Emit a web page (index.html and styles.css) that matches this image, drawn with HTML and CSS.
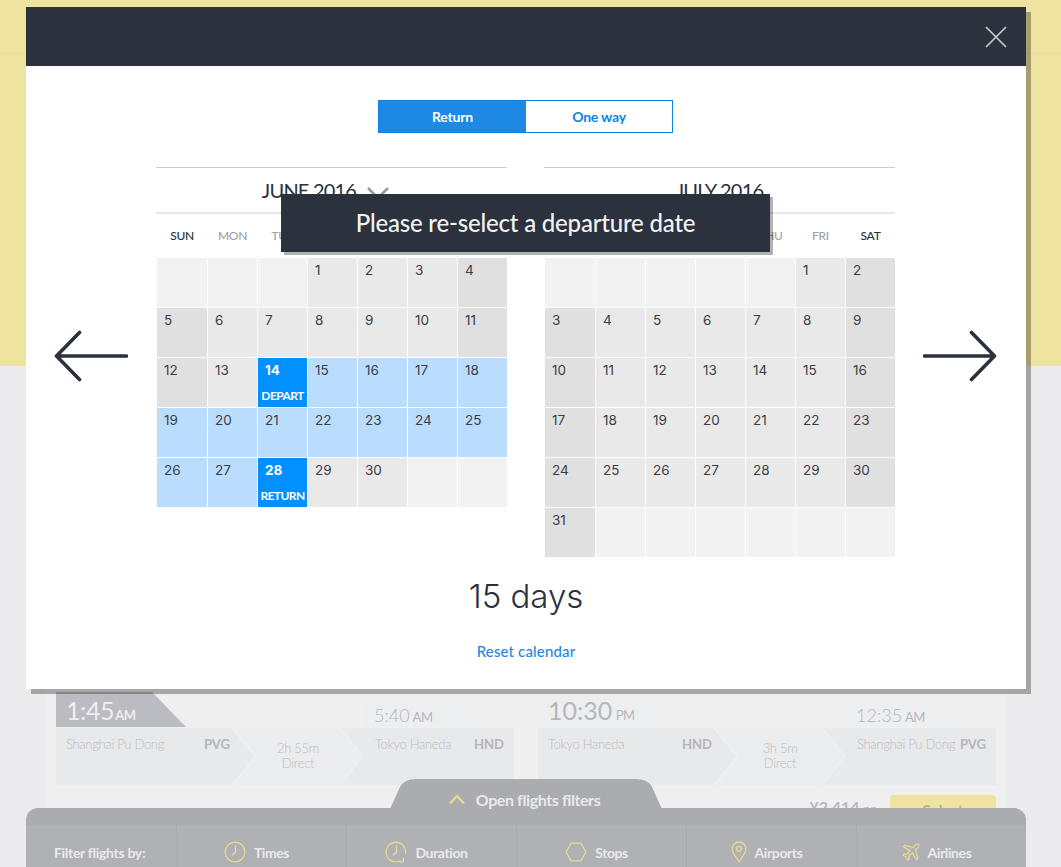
FILE: index.html
```html
<!DOCTYPE html>
<html lang="en">
  <head>
    <meta charset="UTF-8" />
    <title>Flight calendar</title>
    <link rel="stylesheet" href="styles.css">
  </head>
  <body>
    <div class="page-top">
      <div class="page-top-bar"></div>
    </div>

    <div class="results">
      <div class="legs">
        <div class="leg">
          <div class="leg-times">
            <div class="time-tab time-tab-main">1:45 <small>AM</small></div>
            <div class="time-tab time-tab-arrive">5:40 <small>AM</small></div>
          </div>
          <div class="route">
            <div class="seg seg-from"><span>Shanghai Pu Dong</span><b>PVG</b></div>
            <div class="seg seg-mid">2h 55m<br />Direct</div>
            <div class="seg seg-to"><span>Tokyo Haneda</span><b>HND</b></div>
          </div>
        </div>
        <div class="leg">
          <div class="leg-times">
            <div class="time-tab time-tab-plain">10:30 <small>PM</small></div>
            <div class="time-tab time-tab-arrive">12:35 <small>AM</small></div>
          </div>
          <div class="route">
            <div class="seg seg-from"><span>Tokyo Haneda</span><b>HND</b></div>
            <div class="seg seg-mid">3h 5m<br />Direct</div>
            <div class="seg seg-to"><span>Shanghai Pu Dong</span><b>PVG</b></div>
          </div>
        </div>
      </div>
      <div class="price-row">
        <span class="price">¥2,414 <small>pp</small></span>
        <span class="select-btn">Select</span>
      </div>
    </div>

    <div class="filters">
      <div class="filters-tab">
        <svg width="18" height="12" viewBox="0 0 18 12"><path d="M2 10.5 9 3l7 7.5" fill="none" stroke="#e8d98f" stroke-width="2.4" /></svg>
        Open flights filters
      </div>
      <div class="filters-top"></div>
      <div class="filters-row">
        <div class="filter filter-label">Filter flights by:</div>
        <div class="filter">
          <svg width="22" height="22" viewBox="0 0 22 22" class="ficon"><circle cx="11" cy="11" r="9.8" /><path d="M11.5 4.5V11L8 14.5" /></svg>
          Times
        </div>
        <div class="filter">
          <svg width="22" height="22" viewBox="0 0 22 22" class="ficon"><path d="M20.500 13A9.800 9.800 0 1 0 15.500 19.700" /><path d="M11.500 4.500V11L8 14.500" /><path d="M14.500 21.200l3.800-.6.200-3.800" /></svg>
          Duration
        </div>
        <div class="filter">
          <svg width="22" height="20" viewBox="0 0 22 20" class="ficon"><path d="M1.2 10 6 1.2h10l4.8 8.800-4.800 8.800H6z" /></svg>
          Stops
        </div>
        <div class="filter">
          <svg width="16" height="22" viewBox="0 0 16 22" class="ficon"><path d="M8 20.800C5 16 1.200 12.500 1.200 7.800a6.800 6.800 0 0 1 13.600 0C14.800 12.500 11 16 8 20.800z" /><circle cx="8" cy="7.800" r="2.500" /></svg>
          Airports
        </div>
        <div class="filter">
          <svg width="18" height="18" viewBox="0 0 20 20" class="ficon"><path d="M18.500 1.500c-1-.8-2.500-.3-3.500.7L12.500 5 3 2.500 1.500 4l7.500 4.500-3.500 4-3-.5L1 13.500l3.500 2 2 3.500 1.500-1.500-.5-3 4-3.500 4.500 7.500 1.500-1.500L15 7.500l2.800-2.500c1-1 1.500-2.700.7-3.500z" /></svg>
          Airlines
        </div>
      </div>
    </div>

    <div class="modal">
      <div class="modal-head">
        <svg class="close" width="24" height="24" viewBox="0 0 24 24"><path d="M2 2l20 20M22 2 2 22" fill="none" stroke="#c9cacc" stroke-width="1.700" /></svg>
      </div>

      <div class="toggle">
        <div class="toggle-btn toggle-on">Return</div>
        <div class="toggle-btn">One way</div>
      </div>

      <div class="cal-row">
        <div class="nav-arrow">
          <svg width="74" height="54" viewBox="0 0 74 54"><path d="M72.500 27H3M25.500 3.500 2.500 27l23 23.500" fill="none" stroke="#2b313d" stroke-width="3.600" stroke-linecap="round" stroke-linejoin="round" /></svg>
        </div>

        <div class="cal">
          <div class="cal-month cal-month-open">
            JUNE 2016
            <svg class="cal-chevron" width="22" height="12" viewBox="0 0 22 12"><path d="M1 1l10 10L21 1" fill="none" stroke="#9a9a9a" stroke-width="2.600" /></svg>
          </div>
          <div class="cal-week">
            <span>SUN</span><span class="muted">MON</span><span class="muted">TUE</span><span class="muted">WED</span><span class="muted">THU</span><span class="muted">FRI</span><span>SAT</span>
          </div>
          <div class="cal-grid">
            <div class="day empty"></div>
            <div class="day empty"></div>
            <div class="day empty"></div>
            <div class="day">1</div>
            <div class="day">2</div>
            <div class="day">3</div>
            <div class="day weekend">4</div>
            <div class="day weekend">5</div>
            <div class="day">6</div>
            <div class="day">7</div>
            <div class="day">8</div>
            <div class="day">9</div>
            <div class="day">10</div>
            <div class="day weekend">11</div>
            <div class="day weekend">12</div>
            <div class="day">13</div>
            <div class="day picked">14<span>DEPART</span></div>
            <div class="day range">15</div>
            <div class="day range">16</div>
            <div class="day range">17</div>
            <div class="day range">18</div>
            <div class="day range">19</div>
            <div class="day range">20</div>
            <div class="day range">21</div>
            <div class="day range">22</div>
            <div class="day range">23</div>
            <div class="day range">24</div>
            <div class="day range">25</div>
            <div class="day range">26</div>
            <div class="day range">27</div>
            <div class="day picked">28<span>RETURN</span></div>
            <div class="day">29</div>
            <div class="day">30</div>
            <div class="day empty"></div>
            <div class="day empty"></div>
          </div>
        </div>

        <div class="cal">
          <div class="cal-month">JULY 2016</div>
          <div class="cal-week">
            <span>SUN</span><span class="muted">MON</span><span class="muted">TUE</span><span class="muted">WED</span><span class="muted">THU</span><span class="muted">FRI</span><span>SAT</span>
          </div>
          <div class="cal-grid">
            <div class="day empty"></div>
            <div class="day empty"></div>
            <div class="day empty"></div>
            <div class="day empty"></div>
            <div class="day empty"></div>
            <div class="day">1</div>
            <div class="day weekend">2</div>
            <div class="day weekend">3</div>
            <div class="day">4</div>
            <div class="day">5</div>
            <div class="day">6</div>
            <div class="day">7</div>
            <div class="day">8</div>
            <div class="day weekend">9</div>
            <div class="day weekend">10</div>
            <div class="day">11</div>
            <div class="day">12</div>
            <div class="day">13</div>
            <div class="day">14</div>
            <div class="day">15</div>
            <div class="day weekend">16</div>
            <div class="day weekend">17</div>
            <div class="day">18</div>
            <div class="day">19</div>
            <div class="day">20</div>
            <div class="day">21</div>
            <div class="day">22</div>
            <div class="day weekend">23</div>
            <div class="day weekend">24</div>
            <div class="day">25</div>
            <div class="day">26</div>
            <div class="day">27</div>
            <div class="day">28</div>
            <div class="day">29</div>
            <div class="day weekend">30</div>
            <div class="day weekend">31</div>
            <div class="day empty"></div>
            <div class="day empty"></div>
            <div class="day empty"></div>
            <div class="day empty"></div>
            <div class="day empty"></div>
            <div class="day empty"></div>
          </div>
        </div>

        <div class="nav-arrow">
          <svg width="74" height="54" viewBox="0 0 74 54"><path d="M1.500 27H71M48.500 3.500l23 23.500-23 23.500" fill="none" stroke="#2b313d" stroke-width="3.600" stroke-linecap="round" stroke-linejoin="round" /></svg>
        </div>
      </div>

      <div class="total">15 days</div>
      <div class="reset">Reset calendar</div>

      <div class="notice">Please re-select a departure date</div>
    </div>
  </body>
</html>
```

FILE: styles.css
```css
body {
  position: relative;
  height: 867px;
  margin: 0;
  overflow: hidden;
  background-color: #ebebed;
  font-family: "Lato", sans-serif;
  color: #2b313d;
}

.page-top {
  height: 366px;
  background-color: #efe3a0;
}

.page-top-bar {
  height: 53px;
  border-bottom: 1px solid #e9dd9b;
}

.results {
  width: 960px;
  height: 501px;
  margin-left: 46px;
  padding-top: 326px;
  box-sizing: border-box;
  background-color: #efeff0;
}

.legs {
  display: flex;
  gap: 24px;
  padding: 0 10px;
}

.leg {
  width: 458px;
}

.leg-times {
  display: flex;
  justify-content: space-between;
  align-items: flex-end;
  height: 35px;
}

.time-tab {
  font-size: 25px;
  font-weight: 400;
  word-spacing: -3px;
  color: #b6b7bb;
  white-space: nowrap;
}

.time-tab small {
  font-size: 13px;
  font-weight: 400;
  letter-spacing: -0.4px;
}

.time-tab-main {
  width: 130px;
  height: 35px;
  padding-left: 10px;
  box-sizing: border-box;
  line-height: 37px;
  letter-spacing: -0.4px;
  word-spacing: -5px;
  background-color: #bbbcc1;
  color: #eeeef0;
  clip-path: polygon(0 0, 96px 0, 100% 100%, 0 100%);
}

.time-tab-main small {
  font-weight: 700;
}

.time-tab-plain {
  width: 130px;
  height: 35px;
  padding-left: 10px;
  box-sizing: border-box;
  line-height: 37px;
  background-color: #edeeef;
  clip-path: polygon(0 0, 96px 0, 100% 100%, 0 100%);
}

.time-tab-arrive {
  width: 150px;
  height: 24px;
  padding-left: 10px;
  box-sizing: border-box;
  font-size: 18px;
  font-weight: 300;
  word-spacing: -2px;
  line-height: 24px;
  background-color: #edeeef;
  clip-path: polygon(0 0, 100px 0, 120px 100%, 0 100%);
}

.route {
  display: flex;
  height: 57px;
  margin-top: 1px;
  font-size: 13px;
  font-weight: 300;
  letter-spacing: -0.3px;
  color: #bdbec2;
}

.seg {
  height: 57px;
  box-sizing: border-box;
  background-color: #e8e9eb;
}

.seg b {
  font-weight: 700;
  letter-spacing: 0;
  color: #b5b6ba;
}

.seg-from {
  display: flex;
  justify-content: space-between;
  width: 198px;
  padding: 8px 24px 0 10px;
  clip-path: polygon(0 0, 175px 0, 100% 50%, 175px 100%, 0 100%);
}

.seg-mid {
  width: 128px;
  margin-left: -20px;
  padding: 13px 26px 0 26px;
  line-height: 15px;
  text-align: center;
  background-color: #ebecee;
  clip-path: polygon(0 0, 105px 0, 100% 50%, 105px 100%, 0 100%, 23px 50%);
}

.seg-to {
  display: flex;
  justify-content: space-between;
  width: 173px;
  margin-left: -21px;
  padding: 8px 10px 0 34px;
  clip-path: polygon(0 0, 100% 0, 100% 100%, 0 100%, 23px 50%);
}

.price-row {
  display: flex;
  justify-content: flex-end;
  align-items: flex-start;
  gap: 13px;
  margin-top: 10px;
  padding-right: 10px;
}

.price {
  font-size: 16px;
  font-weight: 700;
  line-height: 24px;
  color: #b9babd;
}

.price small {
  font-size: 12px;
  font-weight: 400;
}

.select-btn {
  width: 106px;
  height: 30px;
  border-radius: 4px;
  background-color: #efe3a0;
  font-size: 15px;
  font-weight: 700;
  line-height: 30px;
  text-align: center;
  color: #b9b38a;
}

.filters {
  position: absolute;
  left: 26px;
  top: 808px;
  width: 1000px;
  height: 59px;
  border-radius: 12px 12px 0 0;
  background-color: #abacb0;
}

.filters-tab {
  position: absolute;
  left: 364px;
  top: -29px;
  display: flex;
  align-items: center;
  justify-content: center;
  gap: 10px;
  width: 272px;
  height: 30px;
  padding: 10px 4px 0 0;
  box-sizing: border-box;
  background-color: #abacb0;
  font-size: 16px;
  font-weight: 700;
  letter-spacing: -0.4px;
  color: #e9e9eb;
  clip-path: path("M0 30 L10 8 Q14 0 26 0 L246 0 Q258 0 262 8 L272 30 Z");
}

.filters-top {
  height: 17px;
}

.filters-row {
  display: flex;
  height: 42px;
  background-color: #b0b1b5;
}

.filter {
  display: flex;
  align-items: center;
  justify-content: center;
  gap: 8px;
  width: 170px;
  height: 54px;
  padding-right: 10px;
  box-sizing: border-box;
  border-left: 1px solid #a8a9ad;
  font-size: 14px;
  font-weight: 700;
  letter-spacing: -0.4px;
  color: #e9e9eb;
}

.filter-label {
  width: 150px;
  padding: 0 0 0 28px;
  justify-content: flex-start;
  border-left: none;
  letter-spacing: -0.3px;
}

.ficon {
  fill: none;
  stroke: #e8d98f;
  stroke-width: 1.3;
}

.modal {
  position: absolute;
  left: 26px;
  top: 7px;
  width: 1000px;
  height: 682px;
  background-color: #fff;
  box-shadow: 5px 5px 0 rgba(0, 0, 0, 0.3);
}

.modal-head {
  display: flex;
  justify-content: flex-end;
  align-items: center;
  height: 59px;
  padding-right: 18px;
  box-sizing: border-box;
  background-color: #2b313d;
}

.toggle {
  display: flex;
  width: 295px;
  height: 33px;
  margin: 34px 0 0 352px;
  box-sizing: border-box;
  border: 1px solid #0a84e8;
}

.toggle-btn {
  flex: 1;
  font-size: 14px;
  font-weight: 700;
  line-height: 31px;
  letter-spacing: -0.2px;
  text-align: center;
  color: #0a84e8;
}

.toggle-on {
  flex: 0 0 147px;
  background-color: #1e88e5;
  color: #fff;
}

.cal-row {
  display: flex;
  gap: 37px;
  margin-top: 34px;
}

.nav-arrow {
  display: flex;
  justify-content: center;
  align-items: center;
  width: 130px;
  margin: 0 -37px;
  padding-bottom: 12px;
}

.nav-arrow:first-child {
  margin-left: 0;
}

.nav-arrow:last-child {
  margin-right: 0;
}

.cal {
  width: 351px;
  height: 390px;
  border-top: 1px solid #ccc;
  box-sizing: border-box;
}

.cal-month {
  display: flex;
  justify-content: center;
  align-items: center;
  height: 46px;
  box-sizing: border-box;
  border-bottom: 2px solid #e8e8e8;
  font-size: 20px;
  font-weight: 400;
  letter-spacing: -0.8px;
  color: #2b313d;
}

.cal-month-open {
  gap: 11px;
  padding-right: 12px;
}

.cal-chevron {
  margin-top: 6px;
}

.cal-week {
  display: grid;
  grid-template-columns: 50px repeat(6, 49px);
  gap: 1px;
  height: 44px;
  margin-left: 1px;
  font-size: 12px;
  font-weight: 500;
  line-height: 44px;
  letter-spacing: -0.3px;
  text-align: center;
  color: #2b313d;
}

.cal-week .muted {
  color: #9fa1a6;
}

.cal-grid {
  display: grid;
  grid-template-columns: 50px repeat(6, 49px);
  grid-auto-rows: 49px;
  gap: 1px;
  margin-left: 1px;
}

.day {
  padding: 4px 0 0 7px;
  box-sizing: border-box;
  background-color: #e9e9e9;
  font-family: "Inter", sans-serif;
  font-size: 13.500px;
  line-height: 17px;
  color: #3a3e48;
}

.empty {
  background-color: #f2f2f2;
}

.weekend {
  background-color: #e0e0e0;
}

.range {
  background-color: #bbddfd;
}

.picked {
  display: flex;
  flex-direction: column;
  justify-content: space-between;
  padding: 4px 0 3px;
  background-color: #0090ff;
  font-weight: 700;
  text-indent: 7px;
  color: #fff;
}

.picked span {
  font-family: "Lato", sans-serif;
  font-size: 12px;
  letter-spacing: -0.6px;
  line-height: 16px;
  text-align: center;
  text-indent: 0;
}

.total {
  margin-top: 16px;
  font-family: "Inter", sans-serif;
  font-size: 33px;
  font-weight: 300;
  line-height: 46px;
  text-align: center;
  color: #2b313d;
}

.reset {
  margin-top: 23px;
  font-size: 15px;
  font-weight: 500;
  line-height: 18px;
  letter-spacing: 0.15px;
  text-align: center;
  color: #1e88e5;
}

.notice {
  position: absolute;
  left: 255px;
  top: 187px;
  width: 489px;
  height: 58px;
  background-color: #2b313d;
  box-shadow: 3px 3px 0 rgba(0, 0, 0, 0.3);
  font-size: 24px;
  font-weight: 500;
  line-height: 58px;
  letter-spacing: -0.2px;
  text-align: center;
  color: #f2f2f2;
}
```
